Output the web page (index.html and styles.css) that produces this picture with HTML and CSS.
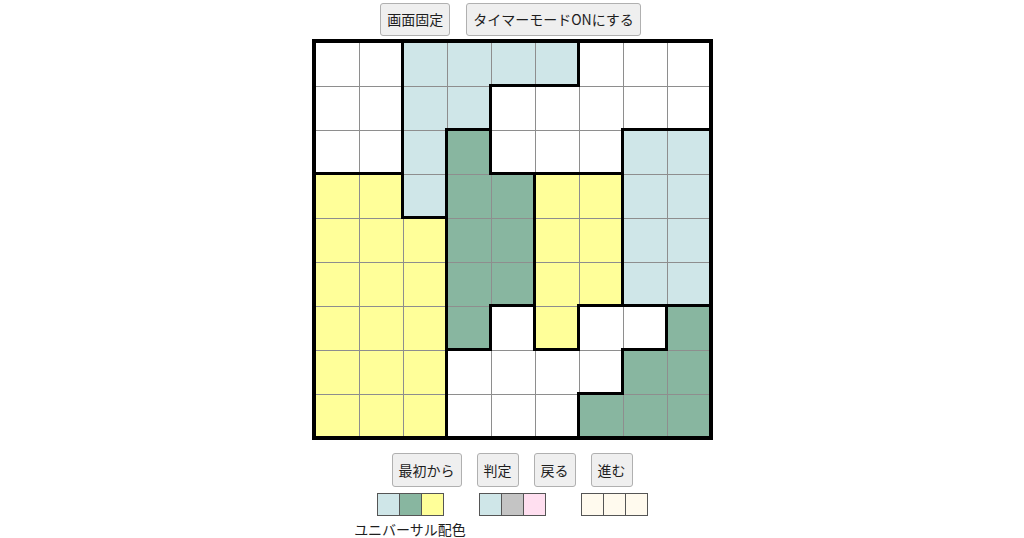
FILE: index.html
```html
<!DOCTYPE html>
<html lang="ja">
<head>
<meta charset="utf-8">
<title>パズル</title>
<link rel="stylesheet" href="styles.css">
</head>
<body>
<div class="page">
  <div class="toolbar top">
    <button class="btn">画面固定</button>
    <button class="btn">タイマーモードONにする</button>
  </div>
  <div class="board">
    <div class="cell w"></div><div class="cell w r"></div><div class="cell bl"></div><div class="cell bl"></div><div class="cell bl b"></div><div class="cell bl r b"></div><div class="cell w"></div><div class="cell w"></div><div class="cell w"></div>
    <div class="cell w"></div><div class="cell w r"></div><div class="cell bl"></div><div class="cell bl r b"></div><div class="cell w"></div><div class="cell w"></div><div class="cell w"></div><div class="cell w b"></div><div class="cell w b"></div>
    <div class="cell w b"></div><div class="cell w r b"></div><div class="cell bl r"></div><div class="cell g r"></div><div class="cell w b"></div><div class="cell w b"></div><div class="cell w r b"></div><div class="cell bl"></div><div class="cell bl"></div>
    <div class="cell y"></div><div class="cell y r"></div><div class="cell bl r b"></div><div class="cell g"></div><div class="cell g r"></div><div class="cell y"></div><div class="cell y r"></div><div class="cell bl"></div><div class="cell bl"></div>
    <div class="cell y"></div><div class="cell y"></div><div class="cell y r"></div><div class="cell g"></div><div class="cell g r"></div><div class="cell y"></div><div class="cell y r"></div><div class="cell bl"></div><div class="cell bl"></div>
    <div class="cell y"></div><div class="cell y"></div><div class="cell y r"></div><div class="cell g"></div><div class="cell g r b"></div><div class="cell y"></div><div class="cell y r b"></div><div class="cell bl b"></div><div class="cell bl b"></div>
    <div class="cell y"></div><div class="cell y"></div><div class="cell y r"></div><div class="cell g r b"></div><div class="cell w r"></div><div class="cell y r b"></div><div class="cell w"></div><div class="cell w r b"></div><div class="cell g"></div>
    <div class="cell y"></div><div class="cell y"></div><div class="cell y r"></div><div class="cell w"></div><div class="cell w"></div><div class="cell w"></div><div class="cell w r b"></div><div class="cell g"></div><div class="cell g"></div>
    <div class="cell y"></div><div class="cell y"></div><div class="cell y r"></div><div class="cell w"></div><div class="cell w"></div><div class="cell w r"></div><div class="cell g"></div><div class="cell g"></div><div class="cell g"></div>
  </div>
  <div class="toolbar bottom">
    <button class="btn tall">最初から</button>
    <button class="btn tall">判定</button>
    <button class="btn tall">戻る</button>
    <button class="btn tall">進む</button>
  </div>
  <div class="palettes">
    <div class="palette first">
      <div class="swatches">
        <span class="sw bl"></span><span class="sw g"></span><span class="sw y"></span>
      </div>
      <div class="palette-label">ユニバーサル配色</div>
    </div>
    <div class="palette second">
      <div class="swatches">
        <span class="sw bl"></span><span class="sw gray"></span><span class="sw pink"></span>
      </div>
    </div>
    <div class="palette third">
      <div class="swatches">
        <span class="sw cream"></span><span class="sw cream"></span><span class="sw cream"></span>
      </div>
    </div>
  </div>
</div>
</body>
</html>
```

FILE: styles.css
```css
html, body {
  margin: 0;
  padding: 0;
  background: #ffffff;
}

body {
  font-family: "Noto Sans CJK JP", "Noto Sans", sans-serif;
  font-size: 14px;
  color: #222222;
}

.page {
  display: flex;
  flex-direction: column;
  align-items: center;
}

.toolbar {
  display: flex;
  justify-content: center;
}

.toolbar.top {
  margin-top: 3px;
  gap: 16px;
  margin-right: 3px;
}

.toolbar.bottom {
  margin-top: 13px;
  gap: 15px;
}

.btn {
  font-family: "Noto Sans CJK JP", "Noto Sans", sans-serif;
  font-size: 14px;
  line-height: 31px;
  height: 33px;
  padding: 0 6px;
  margin: 0;
  color: #1e1e1e;
  background: #efefef;
  border: 1px solid #b0b0b0;
  border-radius: 3px;
}

.btn.tall {
  height: 34px;
  line-height: 32px;
}

.board {
  margin-top: 3px;
  display: grid;
  grid-template-columns: repeat(8, 44px) 41px;
  grid-template-rows: repeat(8, 44px) 41px;
  border: 4px solid #000000;
  margin-left: 1px;
}

.cell {
  position: relative;
  box-sizing: border-box;
  border-right: 1px solid #8e8e8e;
  border-bottom: 1px solid #8e8e8e;
}

.cell:nth-child(9n) {
  border-right: 0;
}

.cell:nth-child(n+73) {
  border-bottom: 0;
}

.cell.r::after {
  content: "";
  position: absolute;
  top: -3px;
  bottom: -1px;
  right: -1px;
  width: 3px;
  background: #000000;
}

.cell.b::before {
  content: "";
  position: absolute;
  left: -3px;
  right: -1px;
  bottom: -1px;
  height: 3px;
  background: #000000;
}

.w { background: #ffffff; }
.bl { background: #cfe6e8; }
.g { background: #88b6a0; }
.y { background: #ffff99; }
.gray { background: #c4c4c4; }
.pink { background: #ffdff0; }
.cream { background: #fffaee; }

.palettes {
  display: flex;
  justify-content: center;
  align-items: flex-start;
  margin-top: 6px;
  padding-right: 23px;
}

.palette {
  display: flex;
  flex-direction: column;
  align-items: center;
}

.palette.first {
  width: 114px;
}

.palette.second {
  margin-left: 12px;
}

.palette.third {
  margin-left: 35px;
}

.swatches {
  display: flex;
}

.sw {
  display: block;
  box-sizing: border-box;
  width: 23px;
  height: 23px;
  border: 1px solid #555555;
}

.sw + .sw {
  margin-left: -1px;
}

.palette-label {
  margin-top: 3px;
  line-height: 20px;
  font-size: 14px;
  color: #1e1e1e;
  white-space: nowrap;
}
```
